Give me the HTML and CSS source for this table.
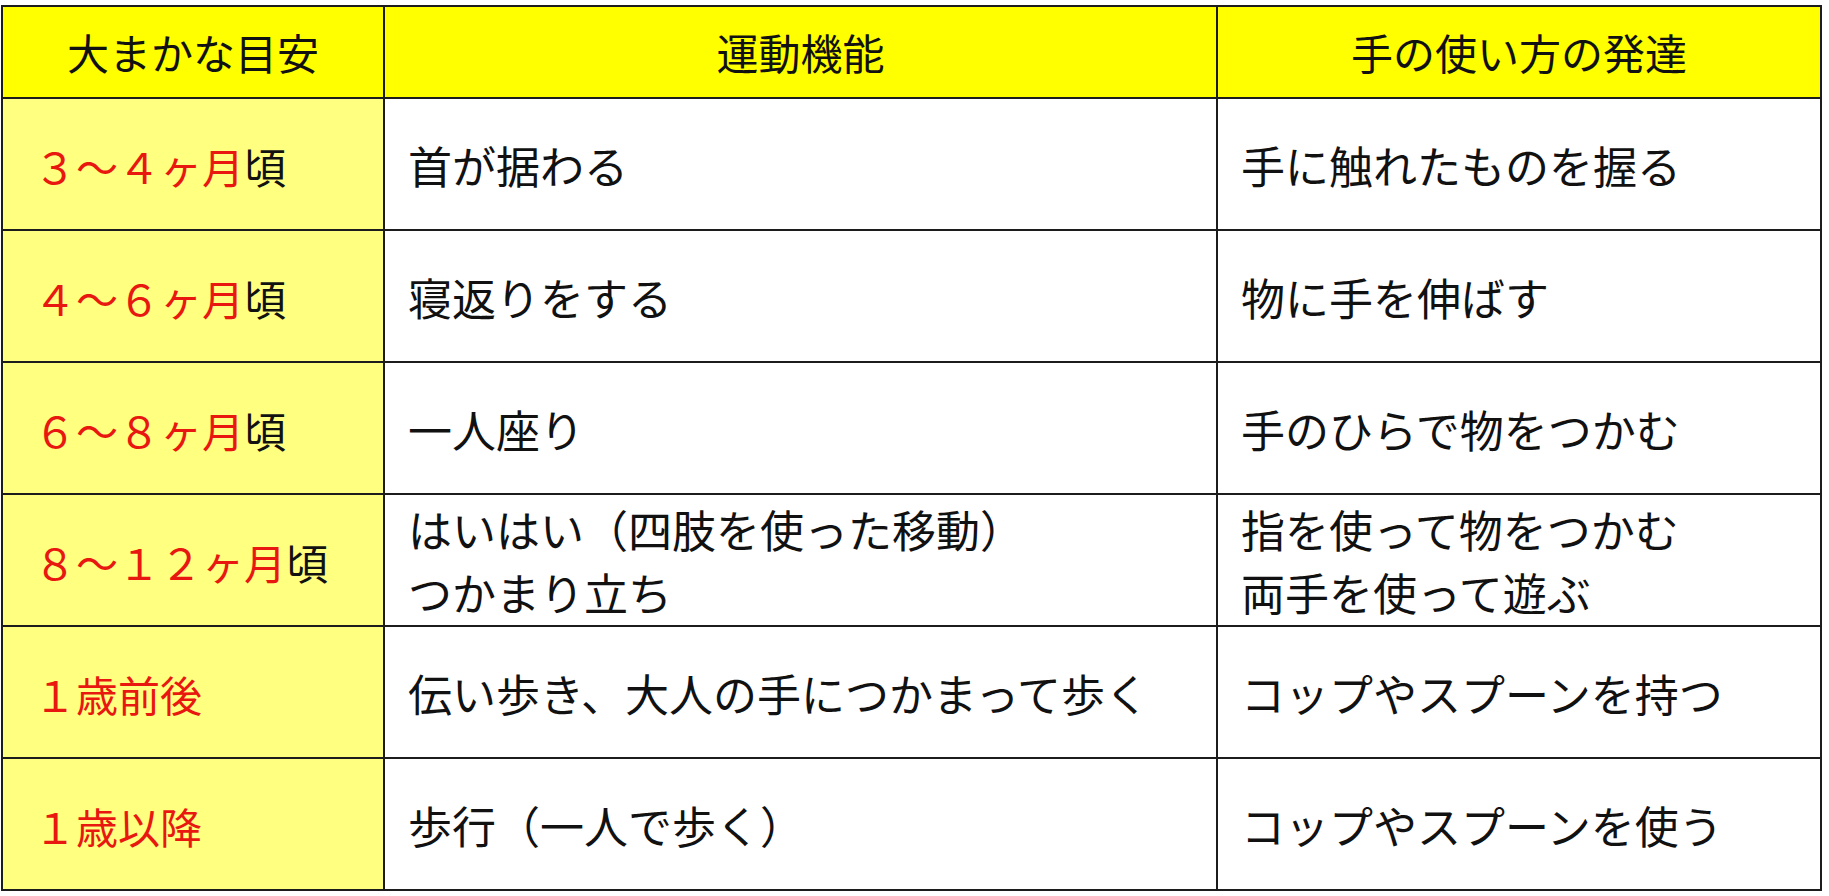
FILE: index.html
```html
<!DOCTYPE html>
<html lang="ja">
<head>
<meta charset="utf-8">
<title>発達の目安</title>
<link rel="stylesheet" href="styles.css">
</head>
<body>
<div class="table">
  <div class="cell head">大まかな目安</div>
  <div class="cell head">運動機能</div>
  <div class="cell head">手の使い方の発達</div>

  <div class="cell age"><span class="red">３～４ヶ月</span>頃</div>
  <div class="cell">首が据わる</div>
  <div class="cell">手に触れたものを握る</div>

  <div class="cell age"><span class="red">４～６ヶ月</span>頃</div>
  <div class="cell">寝返りをする</div>
  <div class="cell">物に手を伸ばす</div>

  <div class="cell age"><span class="red">６～８ヶ月</span>頃</div>
  <div class="cell">一人座り</div>
  <div class="cell">手のひらで物をつかむ</div>

  <div class="cell age"><span class="red">８～１２ヶ月</span>頃</div>
  <div class="cell">はいはい（四肢を使った移動）<br>つかまり立ち</div>
  <div class="cell">指を使って物をつかむ<br>両手を使って遊ぶ</div>

  <div class="cell age"><span class="red">１歳前後</span></div>
  <div class="cell">伝い歩き、大人の手につかまって歩く</div>
  <div class="cell">コップやスプーンを持つ</div>

  <div class="cell age"><span class="red">１歳以降</span></div>
  <div class="cell">歩行（一人で歩く）</div>
  <div class="cell">コップやスプーンを使う</div>
</div>
</body>
</html>
```

FILE: styles.css
```css
html, body {
  margin: 0;
  padding: 0;
  background: #ffffff;
}

body {
  font-family: "Noto Sans CJK JP", "Noto Sans", sans-serif;
  color: #111111;
}

.table {
  display: grid;
  grid-template-columns: 382px 833px 604px;
  grid-template-rows: 92px repeat(6, 132px);
  width: max-content;
  margin: 5px 0 0 1px;
  border-left: 2px solid #1c1c1c;
  border-top: 2px solid #1c1c1c;
}

.cell {
  box-sizing: border-box;
  display: flex;
  align-items: center;
  border-right: 2px solid #1c1c1c;
  border-bottom: 2px solid #1c1c1c;
  padding: 2px 0 0 23px;
  font-size: 44px;
  line-height: 63px;
  white-space: nowrap;
  background: #ffffff;
}

.head {
  background: #ffff00;
  justify-content: center;
  padding: 0 0 2px 0;
  font-size: 42px;
}

.age {
  background: #ffff80;
  padding-left: 31px;
  font-size: 42px;
}

.red {
  color: #e8170f;
}
```
